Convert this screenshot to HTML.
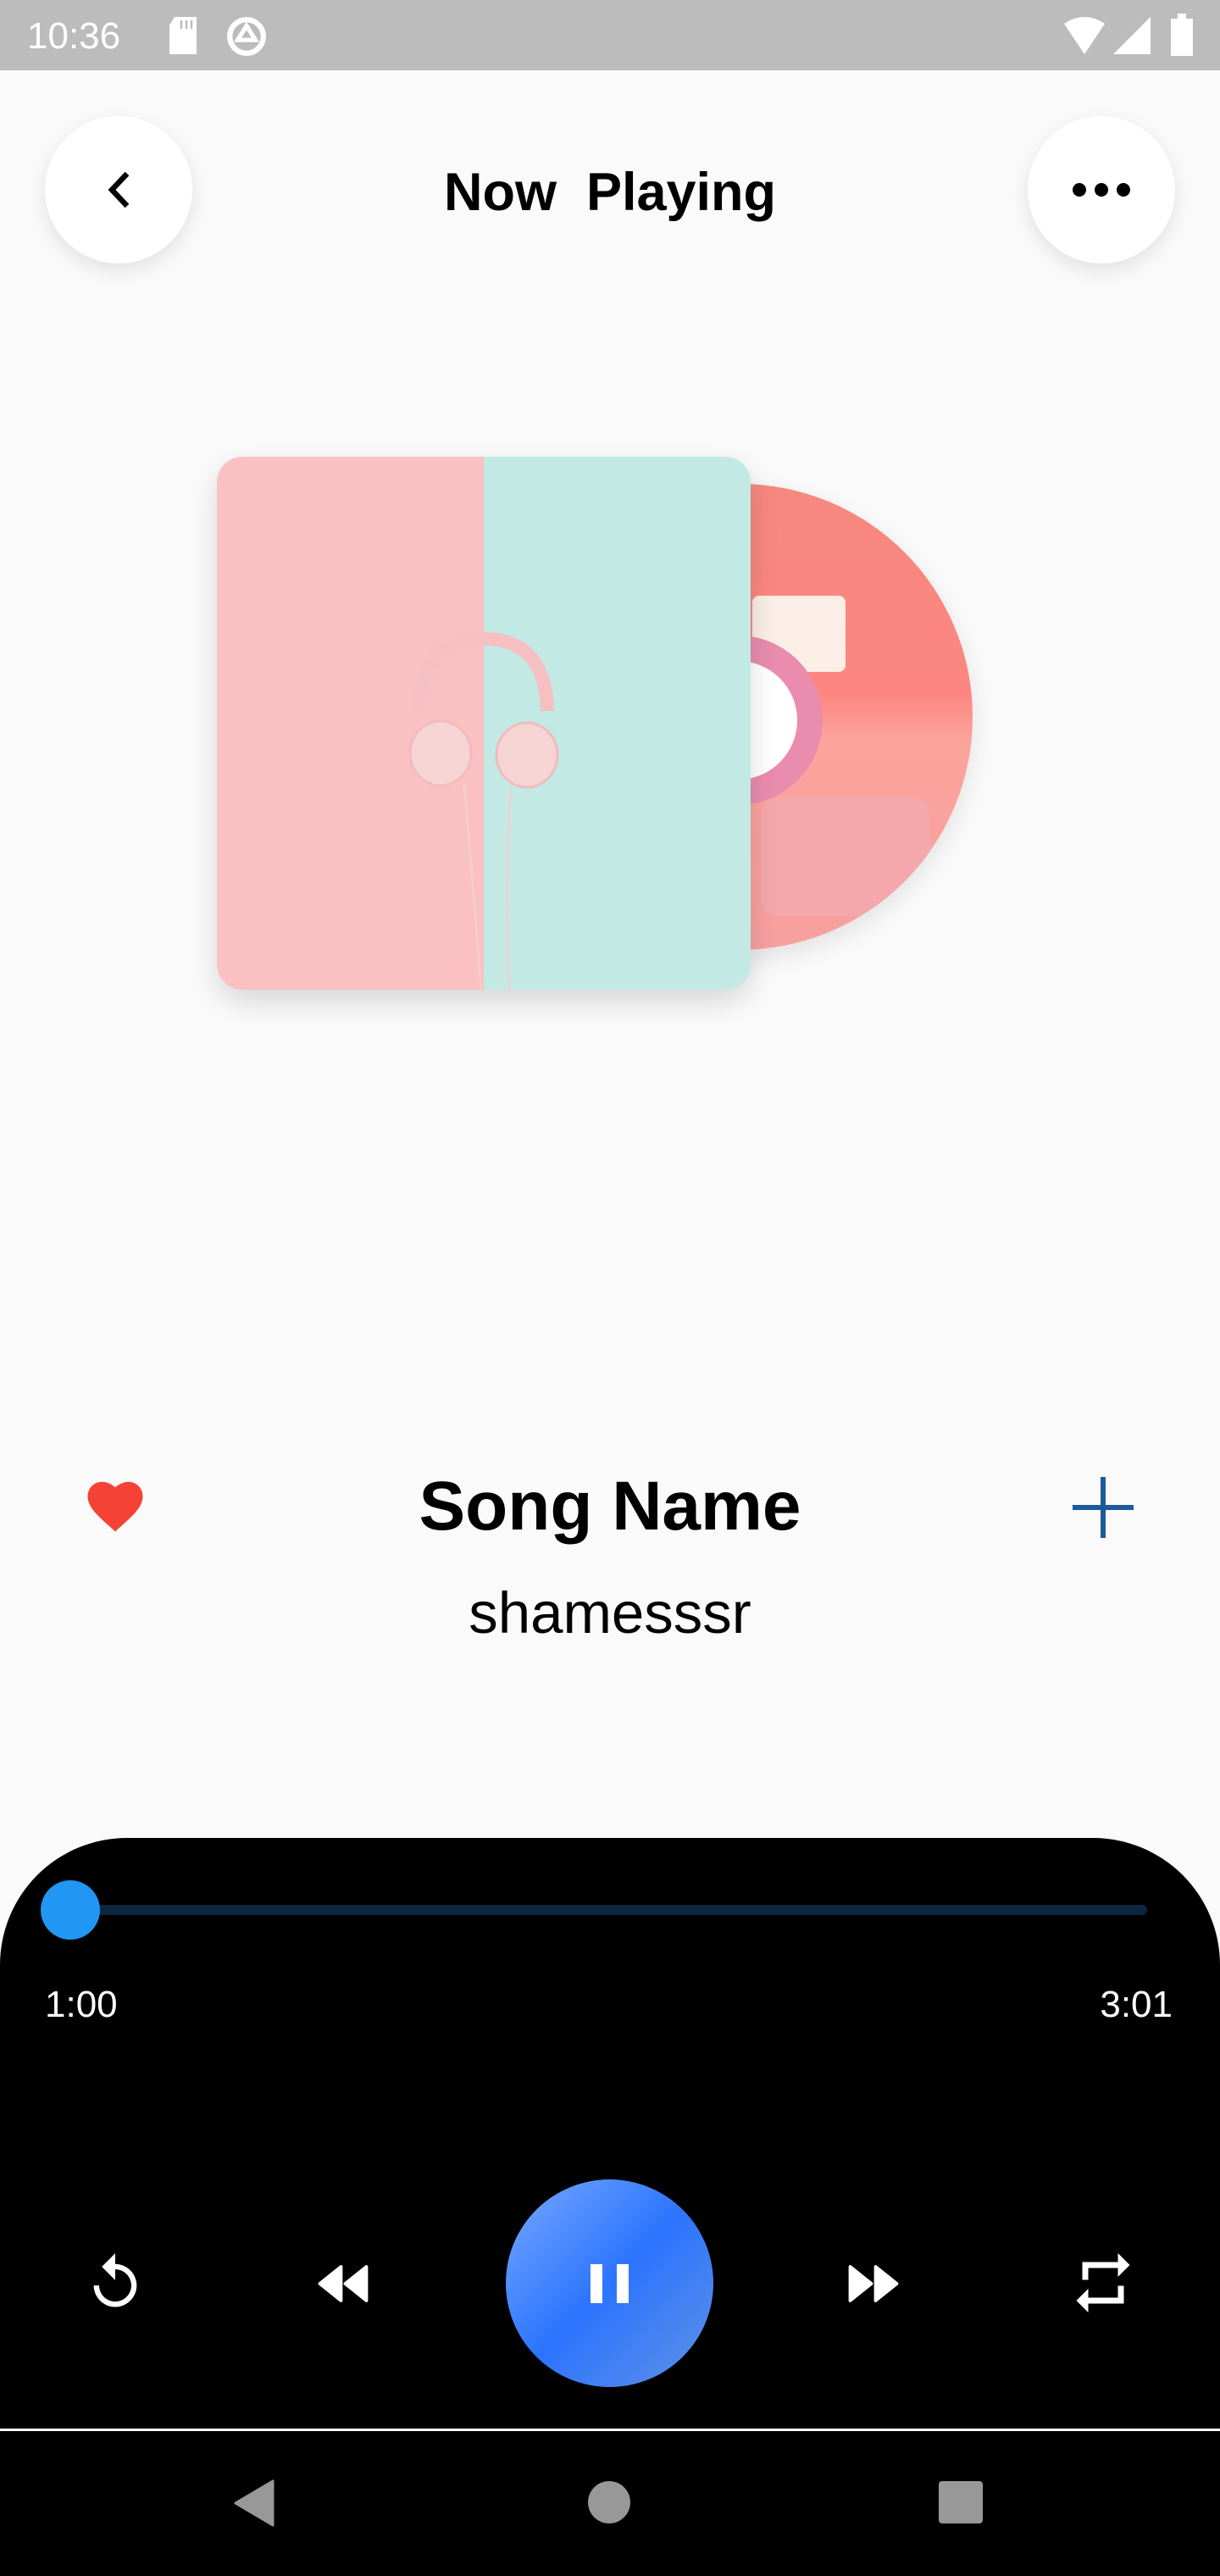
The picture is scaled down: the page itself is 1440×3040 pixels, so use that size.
<!DOCTYPE html>
<html><head><meta charset="utf-8">
<style>
*{margin:0;padding:0;box-sizing:border-box}
body{width:1440px;height:3040px;background:#fafafa;font-family:"Liberation Sans",sans-serif;position:relative;overflow:hidden}
.abs{position:absolute}
.status{left:0;top:0;width:1440px;height:83px;background:#bcbcbc;color:#fff}
.circbtn{width:174px;height:174px;border-radius:50%;background:#fff;box-shadow:0 8px 24px rgba(0,0,0,.10)}
.panel{left:0;top:2169px;width:1440px;height:701px;background:#000;border-radius:150px 150px 0 0}
</style></head><body>
<div class="abs status">
  <div class="abs" style="left:32px;top:18px;font-size:44px;color:#fff">10:36</div>
  <svg class="abs" style="left:196px;top:20px" width="40" height="44" viewBox="0 0 20 22"><path d="M5 0h13v22H2V5z" fill="#fff"/><path d="M9 2v5M12 2v5M15 2v5" stroke="#bcbcbc" stroke-width="1.2"/></svg>
  <svg class="abs" style="left:266px;top:18px" width="50" height="50" viewBox="0 0 24 24"><circle cx="12" cy="12" r="9.5" fill="none" stroke="#fff" stroke-width="3"/><path d="M12 6l-5 8h10z" fill="none" stroke="#fff" stroke-width="2.5"/></svg>
  <svg class="abs" style="left:1256px;top:20px" width="48" height="44" viewBox="0 0 24 22"><path d="M0 4Q12-4 24 4L12 22z" fill="#fff"/></svg>
  <svg class="abs" style="left:1314px;top:20px" width="44" height="44" viewBox="0 0 22 22"><path d="M22 0V22H0z" fill="#fff"/></svg>
  <svg class="abs" style="left:1382px;top:16px" width="26" height="50" viewBox="0 0 13 25"><path d="M4 0h5v3h4v22H0V3h4z" fill="#fff"/></svg>
</div>

<div class="abs circbtn" style="left:53px;top:137px"></div>
<svg class="abs" style="left:122px;top:201px" width="36" height="46" viewBox="0 0 18 23"><path d="M14 2L5 11.5 14 21" fill="none" stroke="#000" stroke-width="3.2"/></svg>
<div class="abs circbtn" style="left:1213px;top:137px"></div>
<svg class="abs" style="left:1262px;top:209px" width="76" height="30" viewBox="0 0 76 30"><circle cx="12" cy="15" r="8"/><circle cx="38" cy="15" r="8"/><circle cx="64" cy="15" r="8"/></svg>
<div class="abs" style="left:0;width:1440px;top:191px;text-align:center;font-size:63px;font-weight:bold;color:#000;white-space:pre">Now  Playing</div>

<!-- disc -->
<div class="abs" style="left:598px;top:571px;width:550px;height:550px;border-radius:50%;background:linear-gradient(180deg,#f68880 0%,#fd8680 45%,#fca39c 55%,#f7a0a0 100%);box-shadow:0 10px 30px rgba(0,0,0,.10);overflow:hidden">
  <div class="abs" style="left:300px;top:370px;width:200px;height:140px;background:#f4a8ac;border-radius:20px"></div>
  <div class="abs" style="left:290px;top:132px;width:110px;height:90px;background:#fbeee6;border-radius:8px"></div>
  <div class="abs" style="left:173px;top:179px;width:200px;height:200px;border-radius:50%;background:#e98cae"></div>
  <div class="abs" style="left:203px;top:209px;width:140px;height:140px;border-radius:50%;background:#fff"></div>
</div>

<!-- album -->
<div class="abs" style="left:256px;top:539px;width:630px;height:629px;border-radius:30px;overflow:hidden;box-shadow:0 14px 34px rgba(0,0,0,.14);background:linear-gradient(90deg,#fbc0c1 0 50%,#c2e9e3 50% 100%)">
  <svg class="abs" style="left:0;top:0" width="630" height="629" viewBox="0 0 630 629">
    <path d="M240 300Q240 215 315 215Q388 215 390 300" fill="none" stroke="#f6c0c2" stroke-width="16"/>
    <ellipse cx="264" cy="350" rx="36" ry="38" fill="#f7d4d4" stroke="#efbcbc" stroke-width="3"/>
    <ellipse cx="366" cy="352" rx="36" ry="38" fill="#f7d4d4" stroke="#efbcbc" stroke-width="3"/>
    <path d="M292 385Q300 480 312 629M347 390Q340 500 345 629" fill="none" stroke="#f2d0d0" stroke-width="2.5"/>
  </svg>
</div>

<!-- song info -->
<svg class="abs" style="left:98px;top:1741px" width="76" height="68" viewBox="0 0 24 22"><path d="M12 21.5l-1.5-1.4C5 15.3 1.5 12.1 1.5 8 1.5 4.9 3.9 2.5 7 2.5c1.7 0 3.4.8 5 2.1 1.6-1.3 3.3-2.1 5-2.1 3.1 0 5.5 2.4 5.5 5.5 0 4.1-3.5 7.3-9 12.1z" fill="#f44336"/></svg>
<div class="abs" style="left:0;width:1440px;top:1731px;text-align:center;font-size:82px;font-weight:bold;color:#000">Song Name</div>
<div class="abs" style="left:0;width:1440px;top:1864px;text-align:center;font-size:69px;color:#000">shamesssr</div>
<svg class="abs" style="left:1264px;top:1741px" width="76" height="76" viewBox="0 0 76 76"><path d="M38 2V74M2 38H74" stroke="#1f5b9a" stroke-width="6"/></svg>

<!-- panel -->
<div class="abs panel"></div>
<div class="abs" style="left:83px;top:2248px;width:1271px;height:12px;border-radius:6px;background:#0b2740"></div>
<div class="abs" style="left:48px;top:2219px;width:70px;height:70px;border-radius:50%;background:#2196f3"></div>
<div class="abs" style="left:53px;top:2341px;font-size:44px;color:#fff">1:00</div>
<div class="abs" style="right:56px;top:2341px;font-size:44px;color:#fff">3:01</div>

<svg class="abs" style="left:98px;top:2656px" width="76" height="76" viewBox="0 0 24 24"><path d="M12 5V1L7 6l5 5V7c3.3 0 6 2.7 6 6s-2.7 6-6 6-6-2.7-6-6H4c0 4.4 3.6 8 8 8s8-3.6 8-8-3.6-8-8-8z" fill="#fff"/></svg>
<svg class="abs" style="left:372px;top:2670px" width="66" height="50" viewBox="0 0 26 20"><path d="M12 2v16L2 10zM24 2v16L14 10z" fill="#fff" stroke="#fff" stroke-width="1.5" stroke-linejoin="round"/></svg>
<div class="abs" style="left:597px;top:2572px;width:245px;height:245px;border-radius:50%;background:linear-gradient(135deg,#76a9ff 0%,#2c74ff 50%,#5f92e6 100%)"></div>
<div class="abs" style="left:697px;top:2672px;width:14px;height:46px;background:#fff"></div>
<div class="abs" style="left:728px;top:2672px;width:14px;height:46px;background:#fff"></div>
<svg class="abs" style="left:998px;top:2670px" width="66" height="50" viewBox="0 0 26 20"><path d="M2 2v16L12 10zM14 2v16L24 10z" fill="#fff" stroke="#fff" stroke-width="1.5" stroke-linejoin="round"/></svg>
<svg class="abs" style="left:1260px;top:2652px" width="84" height="84" viewBox="0 0 24 24"><path d="M7 7h10v3l4-4-4-4v3H5v6h2V7zm10 10H7v-3l-4 4 4 4v-3h12v-6h-2v4z" fill="#fff"/></svg>

<div class="abs" style="left:0;top:2866px;width:1440px;height:3px;background:#fff"></div>
<div class="abs" style="left:0;top:2869px;width:1440px;height:171px;background:#000"></div>
<svg class="abs" style="left:274px;top:2926px" width="52" height="56" viewBox="0 0 26 28"><path d="M24 1V27L2 14z" fill="#989898" stroke="#989898" stroke-width="1.5" stroke-linejoin="round"/></svg>
<div class="abs" style="left:694px;top:2928px;width:50px;height:50px;border-radius:50%;background:#989898"></div>
<div class="abs" style="left:1108px;top:2928px;width:52px;height:50px;border-radius:4px;background:#989898"></div>
</body></html>
